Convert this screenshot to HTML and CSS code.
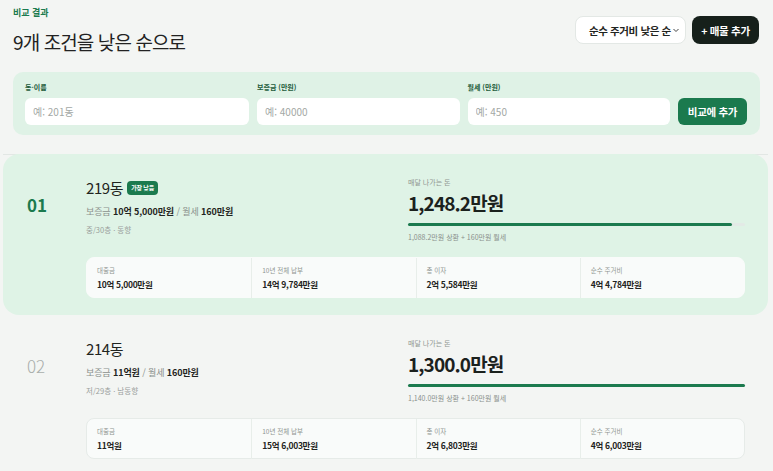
FILE: index.html
```html
<!DOCTYPE html>
<html lang="ko">
<head>
    <meta charset="utf-8">
    <title>비교 결과</title>
    <link rel="stylesheet" href="styles.css">
</head>
<body>
    <div class="page">
        <div class="head">
            <div>
                <div class="eyebrow">비교 결과</div>
                <h1>9개 조건을 낮은 순으로</h1>
            </div>
            <div class="head-actions">
                <div class="sort">순수 주거비 낮은 순
                    <svg width="8" height="8" viewBox="0 0 8 8"><path d="M1.5 3 L4 5.5 L6.5 3" fill="none" stroke="#444" stroke-width="1"/></svg>
                </div>
                <button class="btn-dark">+ 매물 추가</button>
            </div>
        </div>

        <div class="add-form">
            <div class="field">
                <label>동·이름</label>
                <input type="text" placeholder="예: 201동">
            </div>
            <div class="field">
                <label>보증금 (만원)</label>
                <input type="text" placeholder="예: 40000">
            </div>
            <div class="field">
                <label>월세 (만원)</label>
                <input type="text" placeholder="예: 450">
            </div>
            <button class="btn-green">비교에 추가</button>
        </div>

        <div class="list">
            <div class="card best">
                <div class="rank">01</div>
                <div class="info">
                    <div class="name">219동 <span class="badge">가장 낮음</span></div>
                    <div class="terms">보증금 <b>10억 5,000만원</b> / 월세 <b>160만원</b></div>
                    <div class="meta">중/30층 · 동향</div>
                </div>
                <div class="monthly">
                    <div class="m-label">매달 나가는 돈</div>
                    <div class="m-amount">1,248.2만원</div>
                    <div class="bar"><div class="fill" style="width: 96%"></div></div>
                    <div class="m-sub">1,088.2만원 상환 + 160만원 월세</div>
                </div>
                <div class="stats">
                    <div class="stat"><span>대출금</span><b>10억 5,000만원</b></div>
                    <div class="stat"><span>10년 전체 납부</span><b>14억 9,784만원</b></div>
                    <div class="stat"><span>총 이자</span><b>2억 5,584만원</b></div>
                    <div class="stat"><span>순수 주거비</span><b>4억 4,784만원</b></div>
                </div>
            </div>

            <div class="card">
                <div class="rank">02</div>
                <div class="info">
                    <div class="name">214동</div>
                    <div class="terms">보증금 <b>11억원</b> / 월세 <b>160만원</b></div>
                    <div class="meta">저/29층 · 남동향</div>
                </div>
                <div class="monthly">
                    <div class="m-label">매달 나가는 돈</div>
                    <div class="m-amount">1,300.0만원</div>
                    <div class="bar"><div class="fill" style="width: 100%"></div></div>
                    <div class="m-sub">1,140.0만원 상환 + 160만원 월세</div>
                </div>
                <div class="stats">
                    <div class="stat"><span>대출금</span><b>11억원</b></div>
                    <div class="stat"><span>10년 전체 납부</span><b>15억 6,003만원</b></div>
                    <div class="stat"><span>총 이자</span><b>2억 6,803만원</b></div>
                    <div class="stat"><span>순수 주거비</span><b>4억 6,003만원</b></div>
                </div>
            </div>
        </div>
    </div>
</body>
</html>
```

FILE: styles.css
```css
* {
    box-sizing: border-box;
}
body {
    margin: 0;
    background: #f3f5f3;
    color: #1f2421;
    font-family: "Noto Sans CJK KR", "Noto Sans", sans-serif;
    overflow: hidden;
}
.page {
    padding: 7px 13px 0 13px;
}
.head {
    display: flex;
    justify-content: space-between;
    align-items: flex-start;
}
.eyebrow {
    font-size: 9px;
    font-weight: 700;
    color: #1b7a4e;
    line-height: 12px;
}
h1 {
    margin: 10px 0 0 0;
    font-size: 19px;
    font-weight: 400;
    line-height: 26px;
    letter-spacing: -0.9px;
    color: #222;
}
.head-actions {
    display: flex;
    gap: 6px;
    margin-top: 9px;
    margin-right: 1px;
}
.sort {
    height: 28px;
    width: 111px;
    display: flex;
    align-items: center;
    justify-content: space-between;
    padding: 0 5px 0 13px;
    background: #fff;
    border: 1px solid #e3e8e5;
    border-radius: 8px;
    font-size: 10.5px;
    font-weight: 700;
    letter-spacing: -0.4px;
}
.btn-dark {
    height: 28px;
    width: 67px;
    border: none;
    border-radius: 8px;
    background: #16201b;
    color: #fff;
    font-family: inherit;
    font-size: 10.5px;
    font-weight: 700;
    letter-spacing: -0.3px;
    padding: 0;
}

.add-form {
    margin-top: 17px;
    background: #dff2e6;
    border-radius: 10px;
    padding: 10px 13px 10px 12px;
    display: grid;
    grid-template-columns: 224px 1fr 1fr 69px;
    gap: 8px;
    align-items: end;
}
.field label {
    display: block;
    font-size: 7px;
    font-weight: 700;
    color: #1c5a3a;
    line-height: 10px;
    margin-bottom: 5px;
}
.field input {
    width: 100%;
    height: 27px;
    border: none;
    border-radius: 6px;
    background: #fff;
    padding: 0 8px;
    font-family: inherit;
    font-size: 10px;
    outline: none;
}
.field input::placeholder {
    color: #a3a8a5;
}
.btn-green {
    height: 27px;
    border: none;
    border-radius: 6px;
    background: #1b7a4e;
    color: #fff;
    font-family: inherit;
    font-size: 10.5px;
    font-weight: 700;
    letter-spacing: -0.3px;
    padding: 0;
}

.list {
    margin: 19px -8px 0 -10px;
    border-top: 1px solid #e2e7e4;
}
.card {
    display: grid;
    grid-template-columns: 59px 1fr 337px;
    padding: 25px 23px 17px 24px;
    border-radius: 16px;
}
.card.best {
    background: #dff3e6;
    margin-top: -1px;
}
.rank {
    align-self: center;
    font-size: 17px;
    font-weight: 300;
    color: #a9aeab;
    margin-top: -12px;
}
.best .rank {
    color: #1b7a4e;
    font-weight: 700;
}
.name {
    font-size: 15px;
    line-height: 18px;
    letter-spacing: -0.4px;
    display: flex;
    align-items: center;
    gap: 4px;
}
.badge {
    background: #1b7a4e;
    color: #fff;
    font-size: 6px;
    font-weight: 700;
    padding: 3px 4px;
    border-radius: 4px;
    line-height: 8px;
    letter-spacing: -0.2px;
}
.terms {
    margin-top: 9px;
    font-size: 9px;
    line-height: 12px;
    letter-spacing: -0.1px;
    color: #8a908c;
}
.terms b {
    color: #1f2421;
}
.meta {
    margin-top: 7px;
    font-size: 7.5px;
    line-height: 10px;
    color: #9aa09c;
}
.monthly {
    margin-top: -2px;
}
.m-label {
    font-size: 7px;
    line-height: 10px;
    color: #8f9591;
}
.m-amount {
    margin-top: 4px;
    font-size: 19px;
    font-weight: 700;
    line-height: 24px;
    letter-spacing: -0.9px;
    color: #1b211d;
}
.bar {
    margin-top: 8px;
    height: 3px;
    border-radius: 2px;
    background: #e3eae6;
}
.fill {
    height: 100%;
    border-radius: 2px;
    background: #1b7a4e;
}
.m-sub {
    margin-top: 6px;
    font-size: 7px;
    line-height: 10px;
    color: #8a908c;
}
.stats {
    grid-column: 2 / 4;
    margin-top: 15px;
    display: grid;
    grid-template-columns: repeat(4, 1fr);
    background: #f9fbfa;
    border: 1px solid #e6ebe8;
    border-radius: 8px;
    height: 41px;
}
.best .stats {
    border-color: #f9fbfa;
}
.stat {
    display: flex;
    flex-direction: column;
    gap: 3px;
    padding: 8px 10px;
    border-left: 1px solid #e8eeea;
}
.stat:first-child {
    border-left: none;
}
.stat span {
    font-size: 6.5px;
    line-height: 9px;
    color: #8f9591;
}
.stat b {
    font-size: 8.5px;
    line-height: 12px;
    letter-spacing: -0.3px;
    color: #1f2421;
}
```
